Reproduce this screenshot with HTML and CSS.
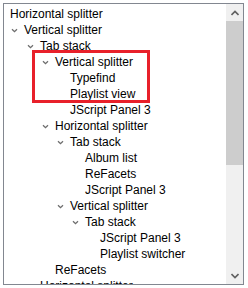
FILE: index.html
```html
<!DOCTYPE html>
<html lang="en">
<head>
  <meta charset="UTF-8" />
  <title>Layout tree</title>
  <link rel="stylesheet" href="styles.css">
</head>
<body>
  <div class="frame">
    <div class="tree">
      <div class="node l0"><span class="label">Horizontal splitter</span></div>
      <div class="node l1"><span class="tw"><svg width="7" height="5" viewBox="0 0 7 5"><path d="M1 1.2 L3.5 3.7 L6 1.2" /></svg></span><span class="label">Vertical splitter</span></div>
      <div class="node l2"><span class="tw"><svg width="7" height="5" viewBox="0 0 7 5"><path d="M1 1.2 L3.5 3.7 L6 1.2" /></svg></span><span class="label">Tab stack</span></div>
      <div class="node l3"><span class="tw"><svg width="7" height="5" viewBox="0 0 7 5"><path d="M1 1.2 L3.5 3.7 L6 1.2" /></svg></span><span class="label">Vertical splitter</span></div>
      <div class="node l4"><span class="tw"></span><span class="label">Typefind</span></div>
      <div class="node l4"><span class="tw"></span><span class="label">Playlist view</span></div>
      <div class="node l4"><span class="tw"></span><span class="label">JScript Panel 3</span></div>
      <div class="node l3"><span class="tw"><svg width="7" height="5" viewBox="0 0 7 5"><path d="M1 1.2 L3.5 3.7 L6 1.2" /></svg></span><span class="label">Horizontal splitter</span></div>
      <div class="node l4"><span class="tw"><svg width="7" height="5" viewBox="0 0 7 5"><path d="M1 1.2 L3.5 3.7 L6 1.2" /></svg></span><span class="label">Tab stack</span></div>
      <div class="node l5"><span class="tw"></span><span class="label">Album list</span></div>
      <div class="node l5"><span class="tw"></span><span class="label">ReFacets</span></div>
      <div class="node l5"><span class="tw"></span><span class="label">JScript Panel 3</span></div>
      <div class="node l4"><span class="tw"><svg width="7" height="5" viewBox="0 0 7 5"><path d="M1 1.2 L3.5 3.7 L6 1.2" /></svg></span><span class="label">Vertical splitter</span></div>
      <div class="node l5"><span class="tw"><svg width="7" height="5" viewBox="0 0 7 5"><path d="M1 1.2 L3.5 3.7 L6 1.2" /></svg></span><span class="label">Tab stack</span></div>
      <div class="node l6"><span class="tw"></span><span class="label">JScript Panel 3</span></div>
      <div class="node l6"><span class="tw"></span><span class="label">Playlist switcher</span></div>
      <div class="node l3"><span class="tw"></span><span class="label">ReFacets</span></div>
      <div class="node l2"><span class="tw"><svg width="7" height="5" viewBox="0 0 7 5"><path d="M1 1.2 L3.5 3.7 L6 1.2" /></svg></span><span class="label">Horizontal splitter</span></div>
    </div>
    <div class="scrollbar">
      <div class="sb-btn"><svg width="8" height="6" viewBox="0 0 8 6"><path d="M0.5 5 L4 1.5 L7.5 5" /></svg></div>
      <div class="sb-track">
        <div class="sb-thumb"></div>
      </div>
      <div class="sb-btn"><svg width="8" height="6" viewBox="0 0 8 6"><path d="M0.5 1 L4 4.5 L7.5 1" /></svg></div>
    </div>
  </div>
  <!-- highlight around the selected splitter -->
  <div class="highlight"></div>
</body>
</html>
```

FILE: styles.css
```css
body {
  margin: 0;
  background: #fff;
  font-family: "Liberation Sans", Arial, sans-serif;
  font-size: 12px;
  color: #000;
}
.frame {
  margin: 3px 0 0 3px;
  width: 239px;
  height: 280px;
  border: 1px solid #828790;
  display: flex;
  overflow: hidden;
}
.tree {
  flex: 1;
  padding-top: 2px;
  overflow: hidden;
}
.node {
  height: 16px;
  display: flex;
  align-items: center;
  white-space: nowrap;
}
.tw {
  width: 15px;
  flex: none;
  display: flex;
  align-items: center;
}
.tw svg {
  margin-left: 2px;
}
.tw path, .sb-btn path {
  fill: none;
  stroke: #6d6d6d;
  stroke-width: 1.3;
}
.l0 { padding-left: 6px; }
.l1 { padding-left: 5px; }
.l2 { padding-left: 21px; }
.l3 { padding-left: 36px; }
.l4 { padding-left: 51px; }
.l5 { padding-left: 66px; }
.l6 { padding-left: 81px; }
.scrollbar {
  width: 17px;
  flex: none;
  background: #f0f0f0;
  display: flex;
  flex-direction: column;
}
.sb-btn {
  height: 17px;
  display: flex;
  align-items: center;
  justify-content: center;
}
.sb-btn path {
  stroke: #606060;
  stroke-width: 1.6;
}
.sb-track {
  flex: 1;
}
.sb-thumb {
  height: 144px;
  background: #cdcdcd;
}
.highlight {
  position: absolute;
  left: 32px;
  top: 50px;
  width: 112px;
  height: 47px;
  border: 3px solid #e8202a;
}
```
